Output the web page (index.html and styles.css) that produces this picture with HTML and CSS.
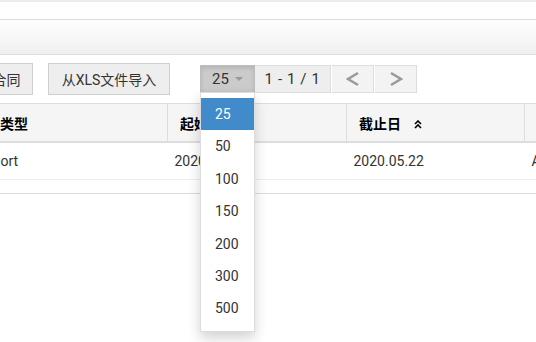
FILE: index.html
```html
<!DOCTYPE html>
<html>
    <head>
        <meta charset="utf-8">
        <title>合同列表</title>
        <link rel="stylesheet" href="styles.css">
    </head>
    <body>
        <div class="page">
            <div class="topbar"></div>
            <div class="band"></div>

            <div class="toolbar">
                <button class="btn btn-new">新增合同</button>
                <button class="btn btn-import">从XLS文件导入</button>
                <div class="pager">
                    <div class="pager-select">
                        <span>25</span><span class="caret"></span>
                        <ul class="dropdown">
                            <li class="active">25</li>
                            <li>50</li>
                            <li>100</li>
                            <li>150</li>
                            <li>200</li>
                            <li>300</li>
                            <li>500</li>
                        </ul>
                    </div>
                    <div class="pager-info">1 - 1 / 1</div>
                    <div class="pager-nav">
                        <svg width="14" height="16" viewBox="0 0 14 16"><polyline points="12,2 2,8 12,14" fill="none" stroke="#9a9a9a" stroke-width="2.6"/></svg>
                    </div>
                    <div class="pager-nav">
                        <svg width="14" height="16" viewBox="0 0 14 16"><polyline points="2,2 12,8 2,14" fill="none" stroke="#9a9a9a" stroke-width="2.6"/></svg>
                    </div>
                </div>
            </div>

            <table class="grid">
                <thead>
                    <tr>
                        <th class="col-type">合同类型</th>
                        <th class="col-date">起始日</th>
                        <th class="col-end">截止日
                            <svg class="sort" width="8" height="9" viewBox="0 0 8 9"><polyline points="1,4 4,1 7,4" fill="none" stroke="#000" stroke-width="1.6"/><polyline points="1,8 4,5 7,8" fill="none" stroke="#000" stroke-width="1.6"/></svg>
                        </th>
                        <th>状态</th>
                    </tr>
                </thead>
                <tbody>
                    <tr>
                        <td class="cell-type">Import</td>
                        <td>2020.05.01</td>
                        <td>2020.05.22</td>
                        <td>Active</td>
                    </tr>
                </tbody>
            </table>
            <div class="grid-footer"></div>
        </div>
    </body>
</html>
```

FILE: styles.css
```css
body {
    margin: 0;
    font-family: Roboto, "Noto Sans CJK SC", sans-serif;
    font-size: 14px;
    color: #333;
    background: #fff;
}

.page {
    height: 342px;
    overflow: hidden;
}

.topbar {
    height: 17px;
    border-top: 2px solid #ececec;
    border-bottom: 1px solid #dcdcdc;
}

.band {
    height: 34px;
    background: linear-gradient(#fff, #efefef);
    border-bottom: 1px solid #dcdcdc;
}

.toolbar {
    display: flex;
    align-items: center;
    margin: 8px 0 0 -48px;
    height: 32px;
}

.btn {
    height: 32px;
    padding: 0;
    margin-right: 15px;
    border: 1px solid #cfcfcf;
    background: #eee;
    color: #333;
    font-family: Roboto, "Noto Sans CJK SC", sans-serif;
    font-size: 14px;
}

.btn-new {
    width: 81px;
}

.btn-import {
    width: 122px;
}

.pager {
    display: flex;
    height: 28px;
    margin-left: 15px;
}

.pager-select {
    position: relative;
    width: 55px;
    box-sizing: border-box;
    display: flex;
    align-items: center;
    padding-left: 11px;
    border: 1px solid #bdbdbd;
    background: #cbcbcb;
    box-shadow: inset 0 2px 4px rgba(0, 0, 0, .12);
    font-size: 15px;
    color: #333;
}

.caret {
    width: 0;
    height: 0;
    margin-left: 6px;
    border-left: 4px solid transparent;
    border-right: 4px solid transparent;
    border-top: 4px solid #999;
}

.dropdown {
    position: absolute;
    top: 100%;
    left: -1px;
    z-index: 10;
    width: 55px;
    box-sizing: border-box;
    margin: 0;
    padding: 5px 0 6px;
    list-style: none;
    background: #fff;
    border: 1px solid #ddd;
    box-shadow: 0 6px 12px rgba(0, 0, 0, .18);
    font-size: 14px;
}

.dropdown li {
    height: 32.4px;
    line-height: 32.4px;
    padding-left: 14px;
    color: #333;
}

.dropdown li.active {
    background: #428bca;
    color: #fff;
}

.pager-info {
    width: 76px;
    box-sizing: border-box;
    display: flex;
    align-items: center;
    justify-content: center;
    border: 1px solid #ddd;
    border-left: 0;
    background: #eee;
    font-size: 15px;
    letter-spacing: 0.6px;
}

.pager-nav {
    width: 42px;
    box-sizing: border-box;
    display: flex;
    align-items: center;
    justify-content: center;
    border: 1px solid #ddd;
    border-left: 0;
    background: #f3f3f3;
    margin-left: 1px;
}

.grid {
    margin: 8px 0 0 -41px;
    border-collapse: collapse;
    width: 700px;
}

.grid th {
    height: 37px;
    text-align: left;
    font-weight: bold;
    color: #000;
    padding: 0 12px;
    background: #f5f5f5;
    border-top: 1px solid #ddd;
    border-bottom: 2px solid #ddd;
    border-left: 1px solid #ddd;
    white-space: nowrap;
}

.grid td {
    height: 36px;
    padding: 0 7px;
    border-bottom: 1px solid #eee;
    white-space: nowrap;
}

.grid td.cell-type {
    padding-left: 17px;
}

.col-type {
    width: 183px;
}

.col-date {
    width: 154px;
}

.col-end {
    width: 153px;
}

.sort {
    margin-left: 10px;
}

.grid-footer {
    margin-top: 13px;
    border-top: 1px solid #ddd;
}
```
